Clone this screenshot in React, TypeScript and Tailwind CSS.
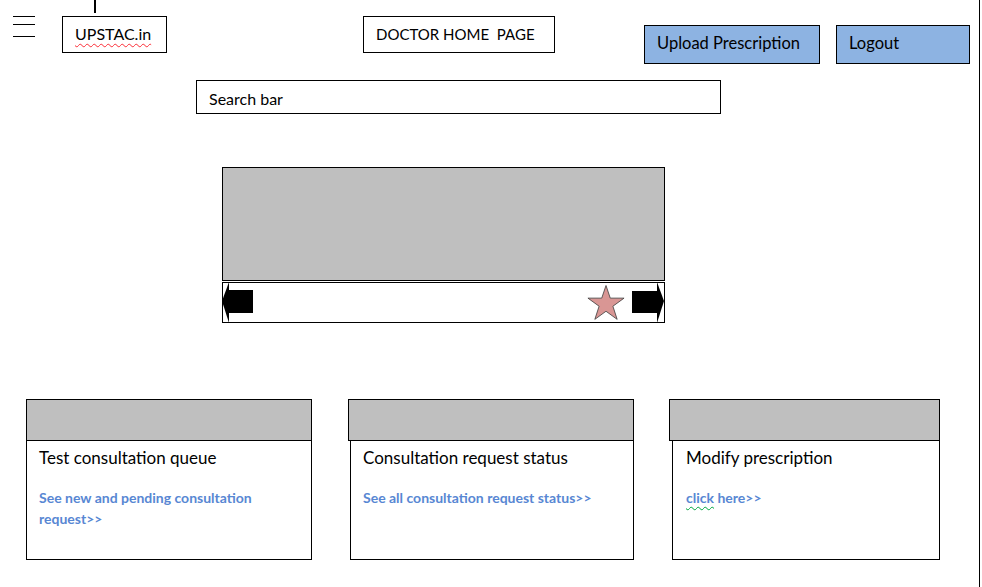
import React from "react";

const cards = [
  {
    title: "Test consultation queue",
    link: "See new and pending consultation request>>",
    w: "w-[286px]",
    bodyW: "w-[286px]",
    shift: "",
    pad: "pl-[12px]",
  },
  {
    title: "Consultation request status",
    link: "See all consultation request status>>",
    w: "w-[286px]",
    bodyW: "w-[284px]",
    shift: "ml-[2px]",
    pad: "pl-[12px]",
  },
  {
    title: "Modify prescription",
    link: "",
    w: "w-[271px]",
    bodyW: "w-[268px]",
    shift: "ml-[3px]",
    pad: "pl-[13px]",
  },
];

const Star = () => (
  <svg width="40" height="37" viewBox="-1 -1 40 37" className="shrink-0">
    <polygon
      points="19,0.5 23.27,13.13 37.07,13.13 25.9,21.24 30.17,34.37 19,26.26 7.83,34.37 12.1,21.24 0.93,13.13 14.73,13.13"
      fill="#d99694"
      stroke="#3b3b3b"
      strokeWidth="0.8"
    />
  </svg>
);

const LeftArrow = () => (
  <svg width="31" height="41" viewBox="0 0 31 41" className="shrink-0 -ml-px -my-px">
    <polygon points="7,0 0,19 7,41" fill="#000" />
    <rect x="6" y="8" width="25" height="23" fill="#000" />
  </svg>
);

const RightArrow = () => (
  <svg width="33" height="41" viewBox="0 0 33 41" className="shrink-0 -mr-px -my-px">
    <rect x="0" y="9" width="26" height="22" fill="#000" />
    <polygon points="25,0 32,19 25,41" fill="#000" />
  </svg>
);

export default function App() {
  return (
    <div className="w-[980px] h-[587px] border-r border-black bg-white text-black font-['Lato',sans-serif] overflow-hidden">
      {/* top bar */}
      <div className="flex items-start">
        <div className="ml-[13px] mt-[16px] w-[22px] flex flex-col">
          <div className="h-px bg-black" />
          <div className="h-px bg-black mt-[7px]" />
          <div className="h-px bg-black mt-[11px]" />
        </div>
        <div className="ml-[27px] flex flex-col">
          <div className="ml-[32px] w-[2px] h-[13px] bg-black" />
          <div className="mt-[3px] w-[105px] h-[37px] border border-black pl-[12px] pt-[7px] text-[16px] leading-[19px]">
            <span className="underline decoration-wavy decoration-red-500 decoration-1 underline-offset-[3px]">UPSTAC.in</span>
          </div>
        </div>
        <div className="ml-[196px] mt-[16px] w-[192px] h-[37px] border border-black pl-[12px] pt-[8px] text-[15px] leading-[18px] whitespace-pre">
          DOCTOR HOME  PAGE
        </div>
        <div className="ml-[89px] mt-[25px] w-[176px] h-[39px] border border-black bg-[#8db3e2] pl-[12px] pt-[8px] text-[16.5px] leading-[19px] cursor-pointer">
          Upload Prescription
        </div>
        <div className="ml-[16px] mt-[25px] w-[134px] h-[39px] border border-black bg-[#8db3e2] pl-[12px] pt-[8px] text-[16.5px] leading-[19px] cursor-pointer">
          Logout
        </div>
      </div>

      {/* search */}
      <div className="ml-[196px] mt-[16px] w-[525px] h-[34px] border border-black pl-[12px] pt-[8px] text-[16px] leading-[19px]">
        Search bar
      </div>

      {/* carousel */}
      <div className="ml-[222px] mt-[53px] w-[443px] flex flex-col">
        <div className="h-[114px] border border-black bg-[#bfbfbf]" />
        <div className="mt-px h-[41px] border border-black flex items-center">
          <LeftArrow />
          <div className="flex-1" />
          <Star />
          <div className="w-[6px]" />
          <RightArrow />
        </div>
      </div>

      {/* cards */}
      <div className="ml-[26px] mt-[76px] flex gap-[36px]">
        {cards.map((c, i) => (
          <div key={i} className={`${c.w} flex flex-col ${i === 2 ? "-ml-px" : ""}`}>
            <div className="h-[42px] border border-black bg-[#bfbfbf]" />
            <div className={`${c.bodyW} ${c.shift} h-[119px] border border-t-0 border-black ${c.pad} pt-[7px]`}>
              <div className="text-[17px] leading-[20px]">{c.title}</div>
              <div className="mt-[19px] text-[14px] leading-[21px] font-bold text-[#5887d3] pr-[20px]">
                {c.link ? (
                  c.link
                ) : (
                  <>
                    <span className="underline decoration-wavy decoration-green-600 decoration-1 underline-offset-[3px]">click</span> here&gt;&gt;
                  </>
                )}
              </div>
            </div>
          </div>
        ))}
      </div>
    </div>
  );
}
